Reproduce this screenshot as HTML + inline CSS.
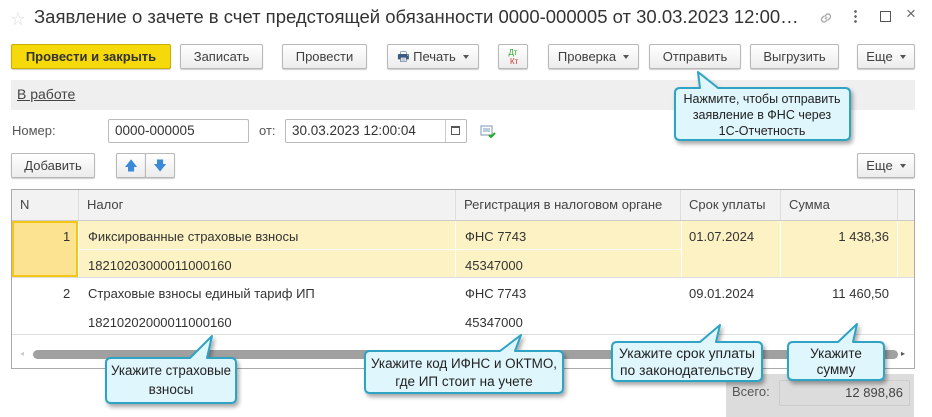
<!DOCTYPE html>
<html><head><meta charset="utf-8"><style>
*{box-sizing:border-box;margin:0;padding:0}
body{width:932px;height:417px;background:#fff;font-family:"Liberation Sans","Noto Sans CJK SC",sans-serif;font-size:13px;color:#333;position:relative;overflow:hidden}
.a{position:absolute}
.btn{position:absolute;height:25px;border:1px solid #b8b8b8;border-radius:2px;background:linear-gradient(#fff,#ececec);box-shadow:0 1px 1px rgba(0,0,0,.2);text-align:center;line-height:23px;color:#404040;font-size:13px}
.dd:after{content:"";display:inline-block;margin-left:7px;border-left:3.5px solid transparent;border-right:3.5px solid transparent;border-top:4px solid #555;vertical-align:2px}
.inp{position:absolute;height:24px;border:1px solid #bbb;border-radius:2px;background:#fff;line-height:22px;padding-left:6px;font-size:13.5px}
.th{position:absolute;top:190px;height:30px;line-height:30px;padding-left:8px;border-right:1px solid #ddd;background:#f2f2f2;font-size:13px;color:#444}
.t{position:absolute;font-size:13px;color:#333}
</style></head><body>
<div class="a" style="left:11px;top:9px;color:#ddd;font-size:14px">☆</div>
<div class="a" style="left:34px;top:6px;font-size:18.5px;color:#333;white-space:nowrap">Заявление о зачете в счет предстоящей обязанности 0000-000005 от 30.03.2023 12:00…</div>
<svg class="a" style="left:818px;top:10px" width="16" height="16" viewBox="0 0 16 16"><g fill="none" stroke="#aaa" stroke-width="1.4"><path d="M7 9l2-2M6 6l-2 2a2.5 2.5 0 003.5 3.5l2-2M10 10l2-2A2.5 2.5 0 008.5 4.5l-2 2"/></g></svg>
<div class="a" style="left:854px;top:9px;width:3px;height:14px;background:radial-gradient(circle,#666 1.2px,transparent 1.5px) 0 0/3px 5px"></div>
<div class="a" style="left:880px;top:11px;width:11px;height:11px;border:1.2px solid #555"></div>
<div class="a" style="left:906px;top:4px;font-size:17px;color:#666">×</div>

<div class="btn" style="left:11px;top:44px;width:160px;background:#f5d90a;border-color:#c9ae00;font-weight:bold;color:#333">Провести и закрыть</div>
<div class="btn" style="left:180px;top:44px;width:83px">Записать</div>
<div class="btn" style="left:282px;top:44px;width:85px">Провести</div>
<div class="btn dd" style="left:387px;top:44px;width:92px"><span style="color:#3a5a80">🖶</span> Печать</div>
<div class="btn" style="left:498px;top:44px;width:30px;font-size:8px;line-height:9px;padding-top:3px"><span style="color:#2a2">Дт</span><br><span style="color:#d33">&nbsp;Кт</span></div>
<div class="btn dd" style="left:548px;top:44px;width:91px">Проверка</div>
<div class="btn" style="left:649px;top:44px;width:92px">Отправить</div>
<div class="btn" style="left:750px;top:44px;width:89px">Выгрузить</div>
<div class="btn dd" style="left:857px;top:44px;width:58px">Еще</div>

<div class="a" style="left:11px;top:80px;width:904px;height:30px;background:#efefef"></div>
<div class="a" style="left:17px;top:86px;font-size:14px;text-decoration:underline;color:#444">В работе</div>

<div class="t" style="left:12px;top:123px;color:#555">Номер:</div>
<div class="inp" style="left:108px;top:119px;width:141px">0000-000005</div>
<div class="t" style="left:259px;top:123px;color:#555">от:</div>
<div class="inp" style="left:285px;top:119px;width:182px">30.03.2023 12:00:04</div>
<div class="a" style="left:445px;top:120px;width:1px;height:22px;background:#ccc"></div>
<div class="a" style="left:451px;top:126px;width:9px;height:9px;border:1px solid #555;border-top-width:2px"></div>
<svg class="a" style="left:480px;top:125px" width="16" height="14"><rect x="1" y="1" width="11" height="9" fill="none" stroke="#7a9ab8"/><path d="M3 4h7M3 6h7" stroke="#7a9ab8"/><path d="M9 10l2 2 4-4" stroke="#2a2" stroke-width="2" fill="none"/></svg>

<div class="btn" style="left:11px;top:153px;width:84px">Добавить</div>
<div class="btn" style="left:116px;top:153px;width:30px;color:#3a8ad8">🡅</div>
<div class="btn" style="left:145px;top:153px;width:30px;color:#3a8ad8">🡇</div>
<div class="btn dd" style="left:857px;top:153px;width:58px">Еще</div>

<div class="a" style="left:11px;top:189px;width:904px;height:180px;border:1px solid #aaa"></div>
<div class="th" style="left:12px;width:67px">N</div>
<div class="th" style="left:79px;width:377px">Налог</div>
<div class="th" style="left:456px;width:225px">Регистрация в налоговом органе</div>
<div class="th" style="left:681px;width:100px">Срок уплаты</div>
<div class="th" style="left:781px;width:117px">Сумма</div>
<div class="th" style="left:898px;width:16px;border:none"></div>
<div class="a" style="left:12px;top:220px;width:902px;height:1px;background:#ccc"></div>
<div class="a" style="left:12px;top:221px;width:902px;height:56px;background:#fdf2c4"></div>
<div class="a" style="left:12px;top:221px;width:66px;height:56px;background:#fbe391;border:2px solid #f5c518"></div>
<div class="a" style="left:79px;top:249px;width:602px;height:1px;background:#fff"></div>
<div class="a" style="left:78px;top:221px;width:1px;height:56px;background:#fff"></div>
<div class="a" style="left:455px;top:221px;width:1px;height:56px;background:#fff"></div>
<div class="a" style="left:681px;top:221px;width:1px;height:56px;background:#fff"></div>
<div class="a" style="left:780px;top:221px;width:1px;height:56px;background:#fff"></div>
<div class="a" style="left:897px;top:221px;width:1px;height:56px;background:#fff"></div>
<div class="a" style="left:12px;top:277px;width:902px;height:1px;background:#ddd"></div>
<div class="a" style="left:12px;top:334px;width:902px;height:1px;background:#ddd"></div>
<div class="t" style="left:63px;top:229px">1</div>
<div class="t" style="left:88px;top:229px">Фиксированные страховые взносы</div>
<div class="t" style="left:88px;top:258px">18210203000011000160</div>
<div class="t" style="left:465px;top:229px">ФНС 7743</div>
<div class="t" style="left:465px;top:258px">45347000</div>
<div class="t" style="left:689px;top:229px">01.07.2024</div>
<div class="t" style="left:790px;top:229px;width:99px;text-align:right">1 438,36</div>
<div class="t" style="left:63px;top:286px">2</div>
<div class="t" style="left:88px;top:286px">Страховые взносы единый тариф ИП</div>
<div class="t" style="left:88px;top:315px">18210202000011000160</div>
<div class="t" style="left:465px;top:286px">ФНС 7743</div>
<div class="t" style="left:465px;top:315px">45347000</div>
<div class="t" style="left:689px;top:286px">09.01.2024</div>
<div class="t" style="left:790px;top:286px;width:99px;text-align:right">11 460,50</div>
<div class="a" style="left:33px;top:350px;width:865px;height:9px;border-radius:5px;background:#a0a0a0"></div>
<div class="a" style="left:20px;top:349px;font-size:8px;color:#ccc">◂</div>
<div class="a" style="left:901px;top:349px;font-size:8px;color:#555">▸</div>

<div class="a" style="left:726px;top:374px;width:188px;height:43px;background:#dcdcdc"></div>
<div class="t" style="left:732px;top:384px;color:#555">Всего:</div>
<div class="a" style="left:779px;top:380px;width:131px;height:26px;border:1px solid #ccc;border-radius:2px;text-align:right;padding-right:6px;line-height:24px;font-size:13px;color:#444">12 898,86</div>

<svg class="a" style="left:0;top:0" width="932" height="417">
<defs><filter id="s" x="-20%" y="-20%" width="140%" height="160%"><feDropShadow dx="2" dy="3" stdDeviation="2" flood-color="#000" flood-opacity=".35"/></filter></defs>
<g fill="#dff6fc" stroke="#2ea3c3" stroke-width="2" stroke-linejoin="round" filter="url(#s)">
<path d="M680 88H700L698 72L718 88H845Q850 88 850 93V135Q850 140 845 140H680Q675 140 675 135V93Q675 88 680 88Z"/>
<path d="M111 358H190L212 336L207 358H231Q236 358 236 363V398Q236 403 231 403H111Q106 403 106 398V363Q106 358 111 358Z"/>
<path d="M370 351H500L521 335L515 351H558Q563 351 563 356V388Q563 393 558 393H370Q365 393 365 388V356Q365 351 370 351Z"/>
<path d="M617 342H700L720 325L716 342H757Q762 342 762 347V376Q762 381 757 381H617Q612 381 612 376V347Q612 342 617 342Z"/>
<path d="M793 342H838L857 324L853 342H879Q884 342 884 347V375Q884 380 879 380H793Q788 380 788 375V347Q788 342 793 342Z"/>
</g>
<g font-family="Liberation Sans, sans-serif" font-size="12.5" fill="#222" text-anchor="middle">
<text x="762" y="103">Нажмите, чтобы отправить</text>
<text x="762" y="119">заявление в ФНС через</text>
<text x="762" y="135">1С-Отчетность</text>
</g>
<g font-family="Liberation Sans, sans-serif" font-size="13.5" fill="#222" text-anchor="middle">
<text x="171" y="375" textLength="120" lengthAdjust="spacingAndGlyphs">Укажите страховые</text>
<text x="171" y="394">взносы</text>
<text x="464" y="368" textLength="186" lengthAdjust="spacingAndGlyphs">Укажите код ИФНС и ОКТМО,</text>
<text x="464" y="386">где ИП стоит на учете</text>
<text x="687" y="358" textLength="136" lengthAdjust="spacingAndGlyphs">Укажите срок уплаты</text>
<text x="687" y="375" textLength="134" lengthAdjust="spacingAndGlyphs">по законодательству</text>
<text x="836" y="358">Укажите</text>
<text x="836" y="374">сумму</text>
</g>
</svg>
</body></html>
